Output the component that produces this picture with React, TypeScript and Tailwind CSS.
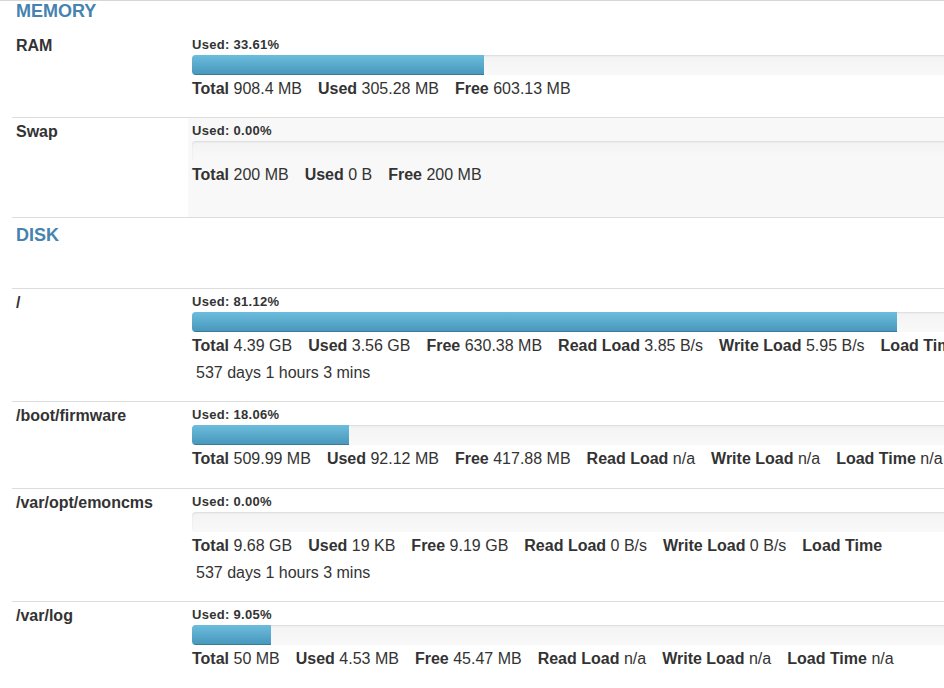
import React from "react";

type Stat = [string, string];

interface Row {
  label: string;
  used: number;
  stats: Stat[];
  days?: string;
  height: string;
  shaded?: boolean;
  hiddenBorder?: boolean;
}

function Progress({ pct }: { pct: number }) {
  return (
    <div className="mt-[2px] h-[20px] w-[869px] overflow-hidden rounded-[4px] bg-linear-to-b from-[#f3f3f3] to-[#f9f9f9] shadow-[inset_0_1px_2px_rgba(0,0,0,0.1)]">
      <div
        className="h-full bg-linear-to-b from-[#6cbddd] to-[#4796bb] shadow-[inset_0_-1px_0_rgba(0,0,0,0.18)]"
        style={{ width: `${pct}%` }}
      />
    </div>
  );
}

function StatRow({ row }: { row: Row }) {
  return (
    <div
      className={`flex border-t ${row.hiddenBorder ? "border-transparent" : "border-[#dddddd]"} ${row.height}`}
    >
      <div className="w-[176px] shrink-0 px-[4px] pt-[4px] text-[16px] leading-[20px] font-bold text-[#333333]">
        {row.label}
      </div>
      <div className={`flex-1 px-[4px] pt-[5px] ${row.shaded ? "bg-[#f8f8f8]" : ""}`}>
        <div className="text-[13px] leading-[16px] font-bold tracking-[0.3px] text-[#333333]">
          Used: {row.used.toFixed(2)}%
        </div>
        <Progress pct={row.used} />
        <div className="mt-[4px] whitespace-nowrap text-[16px] leading-[20px] text-[#333333]">
          {row.stats.map(([k, v]) => (
            <span key={k} className="mr-[16px]">
              <b className="font-bold">{k}</b> {v}
            </span>
          ))}
        </div>
        {row.days && (
          <div className="ml-[4px] mt-[7px] whitespace-nowrap text-[16px] leading-[20px] text-[#333333]">
            {row.days}
          </div>
        )}
      </div>
    </div>
  );
}

const memory: Row[] = [
  {
    label: "RAM",
    used: 33.61,
    stats: [
      ["Total", "908.4 MB"],
      ["Used", "305.28 MB"],
      ["Free", "603.13 MB"],
    ],
    height: "h-[86px]",
    hiddenBorder: true,
  },
  {
    label: "Swap",
    used: 0,
    stats: [
      ["Total", "200 MB"],
      ["Used", "0 B"],
      ["Free", "200 MB"],
    ],
    height: "h-[100px]",
    shaded: true,
  },
];

const disks: Row[] = [
  {
    label: "/",
    used: 81.12,
    stats: [
      ["Total", "4.39 GB"],
      ["Used", "3.56 GB"],
      ["Free", "630.38 MB"],
      ["Read Load", "3.85 B/s"],
      ["Write Load", "5.95 B/s"],
      ["Load Time", ""],
    ],
    days: "537 days 1 hours 3 mins",
    height: "h-[113px]",
  },
  {
    label: "/boot/firmware",
    used: 18.06,
    stats: [
      ["Total", "509.99 MB"],
      ["Used", "92.12 MB"],
      ["Free", "417.88 MB"],
      ["Read Load", "n/a"],
      ["Write Load", "n/a"],
      ["Load Time", "n/a"],
    ],
    height: "h-[87px]",
  },
  {
    label: "/var/opt/emoncms",
    used: 0,
    stats: [
      ["Total", "9.68 GB"],
      ["Used", "19 KB"],
      ["Free", "9.19 GB"],
      ["Read Load", "0 B/s"],
      ["Write Load", "0 B/s"],
      ["Load Time", ""],
    ],
    days: "537 days 1 hours 3 mins",
    height: "h-[113px]",
  },
  {
    label: "/var/log",
    used: 9.05,
    stats: [
      ["Total", "50 MB"],
      ["Used", "4.53 MB"],
      ["Free", "45.47 MB"],
      ["Read Load", "n/a"],
      ["Write Load", "n/a"],
      ["Load Time", "n/a"],
    ],
    height: "h-[87px]",
  },
];

export default function App() {
  return (
    <div className="h-[688px] w-[944px] overflow-hidden border-t border-[#d6d6d6] bg-white font-['Liberation_Sans',Arial,sans-serif] text-[#333333]">
      <div className="w-[1100px] pl-[12px]">
        <div className="h-[30px] px-[4px] text-[18px] leading-[20px] font-bold text-[#4683b0]">
          MEMORY
        </div>
        {memory.map((r) => (
          <StatRow key={r.label} row={r} />
        ))}
        <div className="h-[71px] border-t border-[#dddddd] px-[4px] pt-[7px] text-[18px] leading-[20px] font-bold text-[#4683b0]">
          DISK
        </div>
        {disks.map((r) => (
          <StatRow key={r.label} row={r} />
        ))}
      </div>
    </div>
  );
}
